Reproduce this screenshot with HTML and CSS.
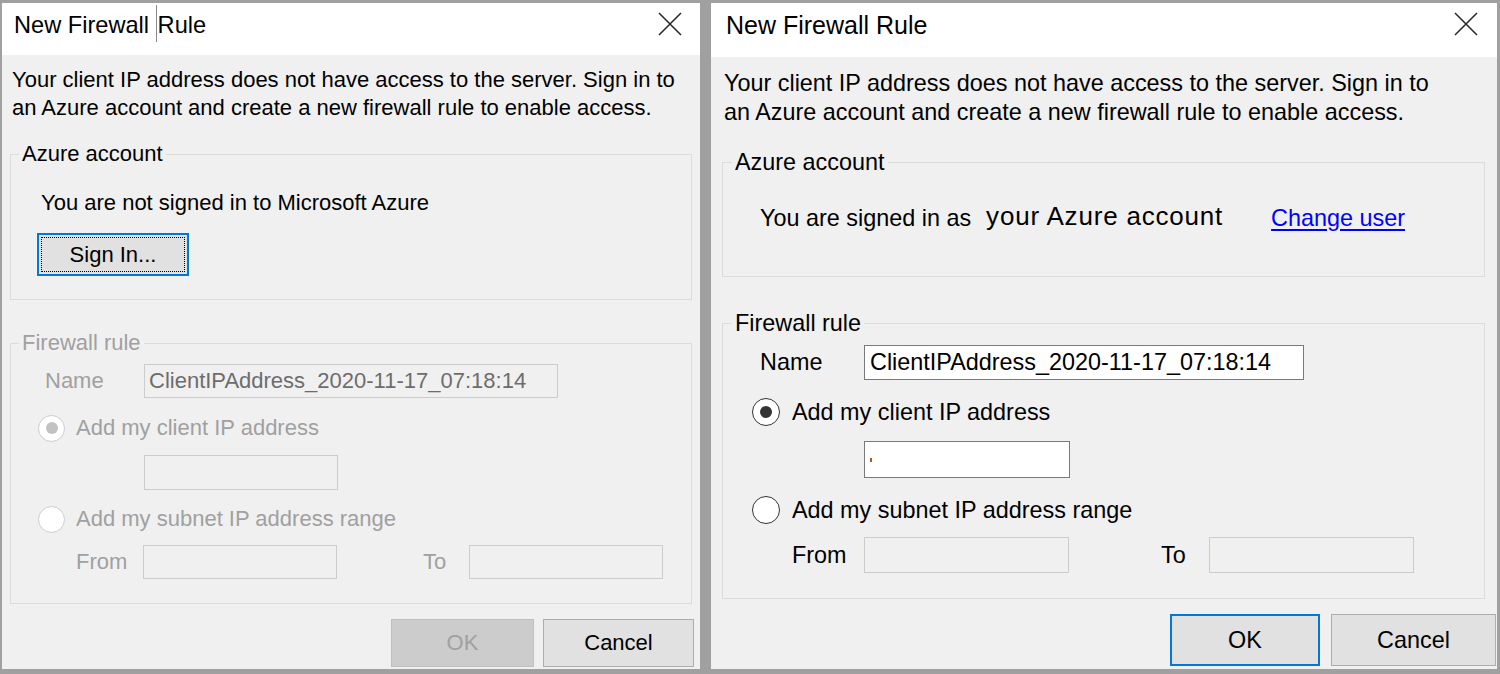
FILE: index.html
```html
<!DOCTYPE html>
<html lang="en">
<head>
<meta charset="utf-8">
<title>New Firewall Rule</title>
<link rel="stylesheet" href="styles.css">
</head>
<body>
<div class="stage">
  <section class="dialog dlg-a">
    <header class="titlebar">
      <span class="title">New Firewall <span class="caret"></span>Rule</span>
      <svg class="close" viewBox="0 0 24 24" width="24" height="24"><path d="M1 1L23 23M23 1L1 23" stroke="#2b2b2b" stroke-width="1.6" fill="none"/></svg>
    </header>
    <p class="intro">Your client IP address does not have access to the server. Sign in to<br>an Azure account and create a new firewall rule to enable access.</p>
    <fieldset class="group group-azure">
      <legend>Azure account</legend>
      <div class="group-body">
        <div class="status">You are not signed in to Microsoft Azure</div>
        <div class="btn btn-focus btn-signin"><span class="focus-ring">Sign In...</span></div>
      </div>
    </fieldset>
    <fieldset class="group group-fw disabled">
      <legend>Firewall rule</legend>
      <div class="group-body">
        <div class="row row-name">
          <span class="lbl lbl-name">Name</span>
          <div class="field field-name">ClientIPAddress_2020-11-17_07:18:14</div>
        </div>
        <div class="row row-radio row-radio1">
          <span class="radio checked"></span>
          <span class="lbl">Add my client IP address</span>
        </div>
        <div class="field field-ip"></div>
        <div class="row row-radio row-radio2">
          <span class="radio"></span>
          <span class="lbl">Add my subnet IP address range</span>
        </div>
        <div class="row row-range">
          <span class="lbl lbl-from">From</span>
          <div class="field field-range"></div>
          <span class="lbl lbl-to">To</span>
          <div class="field field-range"></div>
        </div>
      </div>
    </fieldset>
    <div class="actions">
      <div class="btn btn-ok btn-disabled">OK</div>
      <div class="btn btn-cancel">Cancel</div>
    </div>
  </section>

  <section class="dialog dlg-b">
    <header class="titlebar">
      <span class="title">New Firewall Rule</span>
      <svg class="close" viewBox="0 0 24 24" width="24" height="24"><path d="M1 1L23 23M23 1L1 23" stroke="#2b2b2b" stroke-width="1.6" fill="none"/></svg>
    </header>
    <p class="intro">Your client IP address does not have access to the server. Sign in to<br>an Azure account and create a new firewall rule to enable access.</p>
    <fieldset class="group group-azure">
      <legend>Azure account</legend>
      <div class="group-body">
        <div class="status">
          <span>You are signed in as</span>
          <span class="account">your Azure account</span>
          <a class="link" href="#">Change user</a>
        </div>
      </div>
    </fieldset>
    <fieldset class="group group-fw">
      <legend>Firewall rule</legend>
      <div class="group-body">
        <div class="row row-name">
          <span class="lbl lbl-name">Name</span>
          <div class="field field-name active">ClientIPAddress_2020-11-17_07:18:14</div>
        </div>
        <div class="row row-radio row-radio1">
          <span class="radio checked"></span>
          <span class="lbl">Add my client IP address</span>
        </div>
        <div class="field field-ip active"><span class="speck"></span></div>
        <div class="row row-radio row-radio2">
          <span class="radio"></span>
          <span class="lbl">Add my subnet IP address range</span>
        </div>
        <div class="row row-range">
          <span class="lbl lbl-from">From</span>
          <div class="field field-range"></div>
          <span class="lbl lbl-to">To</span>
          <div class="field field-range"></div>
        </div>
      </div>
    </fieldset>
    <div class="actions">
      <div class="btn btn-ok btn-focus">OK</div>
      <div class="btn btn-cancel">Cancel</div>
    </div>
  </section>
</div>
</body>
</html>
```

FILE: styles.css
```css
* { box-sizing: border-box; }

html, body {
  margin: 0;
  padding: 0;
  background: #a0a0a0;
}

body {
  font-family: "Liberation Sans", Arial, sans-serif;
  color: #000;
}

.stage {
  display: flex;
  gap: 11px;
  height: 674px;
  padding: 3px 3px 5px 2px;
  background: #a0a0a0;
}

.dialog {
  display: flex;
  flex-direction: column;
  background: #f0f0f0;
  overflow: hidden;
}

.dlg-a { width: 698px; font-size: 22px; }
.dlg-b { width: 786px; font-size: 23.4px; }

/* title bar */
.titlebar {
  display: flex;
  justify-content: space-between;
  align-items: flex-start;
  background: #fff;
  flex: none;
}
.dlg-a .titlebar { height: 52px; padding: 7px 18px 0 12px; }
.dlg-b .titlebar { height: 54px; padding: 7px 19px 0 15px; }

.title { white-space: nowrap; line-height: 30px; }
.dlg-a .title { font-size: 23.6px; }
.dlg-b .title { font-size: 25px; }

.caret {
  display: inline-block;
  width: 1px;
  height: 37px;
  background: #8a8a8a;
  vertical-align: middle;
  margin: -6px 1px 0 0;
}

.close { flex: none; margin-top: 2px; }

/* intro text */
.intro { margin: 0; white-space: nowrap; }
.dlg-a .intro { margin-top: 11px; padding-left: 10px; line-height: 28px; }
.dlg-b .intro { margin-top: 12px; padding-left: 13px; line-height: 29px; }

/* group boxes */
.group {
  border: 1px solid #dcdcdc;
  padding: 0;
  min-width: 0;
}
.group legend { padding: 0 3px; }
.dlg-a .group { margin: 0 8px; }
.dlg-b .group { margin: 0 12px 0 11px; }
.dlg-a .group legend { margin-left: 8px; line-height: 26px; }
.dlg-b .group legend { margin-left: 9px; line-height: 28px; }

.dlg-a .group-azure { margin-top: 19px; }
.dlg-a .group-azure .group-body { padding: 23px 0 23px 30px; }
.dlg-a .status { line-height: 26px; }

.dlg-b .group-azure { margin-top: 21px; }
.dlg-b .group-azure .group-body { padding: 28px 0 44px 37px; }
.dlg-b .status { display: flex; align-items: center; height: 28px; white-space: nowrap; }
.account {
  font-size: 26px;
  letter-spacing: 0.8px;
  margin-left: 15px;
  margin-top: -4px;
}
.link {
  color: #0000ff;
  text-decoration: underline;
  text-underline-offset: 3px;
  margin-left: 48px;
}

.dlg-a .group-fw { margin-top: 30px; }
.dlg-b .group-fw { margin-top: 32px; }
.dlg-a .group-fw .group-body { padding: 8px 0 24px 0; }
.dlg-b .group-fw .group-body { padding: 8px 0 25px 0; }

.disabled legend,
.disabled .lbl { color: #a0a0a0; }

/* rows */
.row { display: flex; align-items: center; white-space: nowrap; }

.dlg-a .row-name { height: 34px; }
.dlg-b .row-name { height: 35px; }
.dlg-a .lbl-name { margin-left: 34px; width: 99px; }
.dlg-b .lbl-name { margin-left: 37px; width: 104px; }

.field {
  background: #f0f0f0;
  border: 1px solid #cccccc;
  white-space: nowrap;
  display: flex;
  align-items: center;
}
.field.active { background: #fff; border-color: #7a7a7a; }

.dlg-a .field-name { width: 414px; height: 34px; padding-left: 4px; color: #6d6d6d; }
.dlg-b .field-name { width: 440px; height: 35px; padding-left: 5px; }

.dlg-a .row-radio { height: 28px; }
.dlg-b .row-radio { height: 28px; }
.dlg-a .row-radio1 { margin-top: 16px; }
.dlg-a .row-radio2 { margin-top: 15px; }
.dlg-b .row-radio1 { margin-top: 18px; }
.dlg-b .row-radio2 { margin-top: 18px; }

.radio {
  flex: none;
  display: flex;
  align-items: center;
  justify-content: center;
  border-radius: 50%;
  background: #fff;
}
.dlg-a .radio { width: 27px; height: 27px; margin: 0 11px 0 27px; border: 1.5px solid #cccccc; }
.dlg-b .radio { width: 28px; height: 28px; margin: 0 12px 0 29px; border: 1.6px solid #333333; }
.radio.checked::after {
  content: "";
  width: 12px;
  height: 12px;
  border-radius: 50%;
}
.dlg-a .radio.checked::after { background: #c2c2c2; }
.dlg-b .radio.checked::after { background: #333333; }

.dlg-a .field-ip { margin: 13px 0 0 133px; width: 194px; height: 35px; }
.dlg-b .field-ip { margin: 15px 0 0 141px; width: 206px; height: 37px; }

.speck {
  display: block;
  width: 2px;
  height: 4px;
  margin-left: 5px;
  background: #b35a1a;
}

.dlg-a .row-range { margin-top: 12px; height: 34px; }
.dlg-b .row-range { margin-top: 13px; height: 36px; }
.dlg-a .lbl-from { margin-left: 65px; width: 67px; }
.dlg-b .lbl-from { margin-left: 69px; width: 72px; }
.dlg-a .lbl-to { margin-left: 86px; width: 46px; }
.dlg-b .lbl-to { margin-left: 92px; width: 48px; }
.dlg-a .field-range { width: 194px; height: 34px; }
.dlg-b .field-range { width: 205px; height: 36px; }

/* buttons */
.btn {
  display: flex;
  align-items: center;
  justify-content: center;
  background: #e1e1e1;
  border: 1px solid #adadad;
  white-space: nowrap;
}
.btn-focus { border: 2px solid #0078d7; }
.btn-disabled { background: #cccccc; border-color: #bfbfbf; color: #a0a0a0; }

.btn-signin {
  width: 152px;
  height: 43px;
  margin: 17px 0 0 -4px;
  padding: 2px;
}
.focus-ring {
  flex: 1;
  align-self: stretch;
  display: flex;
  align-items: center;
  justify-content: center;
  border: 1px dotted #000;
}

.actions { display: flex; justify-content: flex-end; }
.dlg-a .actions { margin-top: 15px; gap: 9px; padding-right: 6px; }
.dlg-b .actions { margin-top: 15px; gap: 11px; padding-right: 1px; }
.dlg-a .btn-ok { width: 143px; height: 48px; }
.dlg-a .btn-cancel { width: 151px; height: 48px; }
.dlg-b .btn-ok { width: 150px; height: 52px; }
.dlg-b .btn-cancel { width: 165px; height: 52px; }
```
